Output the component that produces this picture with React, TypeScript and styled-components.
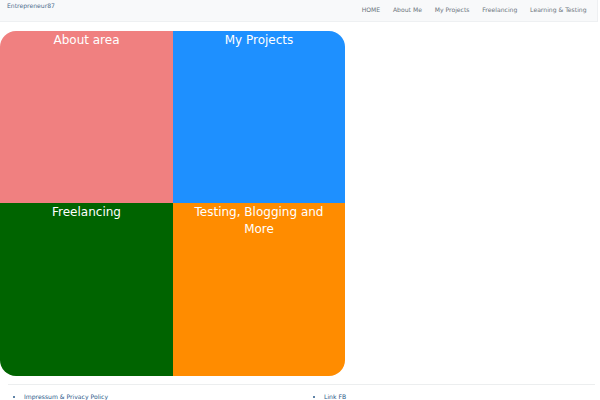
import React from 'react';
import styled, { createGlobalStyle } from 'styled-components';

const GlobalStyle = createGlobalStyle`
    html, body {
        margin: 0;
        padding: 0;
        background: #ffffff;
        font-family: 'DejaVu Sans', Verdana, sans-serif;
    }
`;

const Navbar = styled.nav`
    display: flex;
    justify-content: space-between;
    align-items: flex-start;
    height: 21px;
    margin-right: 2px;
    background-color: #f8f9fa;
    border-bottom: 1px solid #eef0f2;
    border-right: 1px solid #eef0f2;
`;

const Brand = styled.a`
    padding: 2px 0 0 7px;
    font-size: 6.1px;
    color: #4f6f8f;
    text-decoration: none;
`;

const NavList = styled.ul`
    display: flex;
    list-style: none;
    margin: 0;
    padding: 6px 4px 0 0;
`;

const NavLink = styled.li`
    padding: 0 6.4px;
    font-size: 6.1px;
    color: #6c757d;
`;

const Grid = styled.div`
    display: grid;
    grid-template-columns: 173px 172px;
    grid-template-rows: 172px 173px;
    width: 345px;
    margin-top: 9px;
    border-radius: 16px;
    overflow: hidden;
`;

const Tile = styled.div<{ bg: string }>`
    background-color: ${(props) => props.bg};
    color: #ffffff;
    font-size: 12px;
    line-height: 17px;
    text-align: center;
    padding: 1px 14px 0;
`;

const Footer = styled.footer`
    margin: 8px 5px 0 8px;
    border-top: 1px solid #eceeef;
    display: grid;
    grid-template-columns: 300px 1fr;
`;

const FooterList = styled.ul`
    margin: 8px 0 0;
    padding-left: 16px;
    font-size: 6.1px;
`;

const FooterItem = styled.li`
    color: #2a5a8a;
`;

const tiles = [
    { title: 'About area', bg: '#f08080' },
    { title: 'My Projects', bg: '#1e90ff' },
    { title: 'Freelancing', bg: '#006400' },
    { title: 'Testing, Blogging and More', bg: '#ff8c00' },
];

const links = ['HOME', 'About Me', 'My Projects', 'Freelancing', 'Learning & Testing'];

const App: React.FC = () => (
    <>
        <GlobalStyle />
        <Navbar>
            <Brand>Entrepreneur87</Brand>
            <NavList>
                {links.map((link) => (
                    <NavLink key={link}>{link}</NavLink>
                ))}
            </NavList>
        </Navbar>
        <Grid>
            {tiles.map((tile) => (
                <Tile key={tile.title} bg={tile.bg}>
                    {tile.title}
                </Tile>
            ))}
        </Grid>
        <Footer>
            <FooterList>
                <FooterItem>Impressum &amp; Privacy Policy</FooterItem>
            </FooterList>
            <FooterList>
                <FooterItem>Link FB</FooterItem>
            </FooterList>
        </Footer>
    </>
);

export default App;
